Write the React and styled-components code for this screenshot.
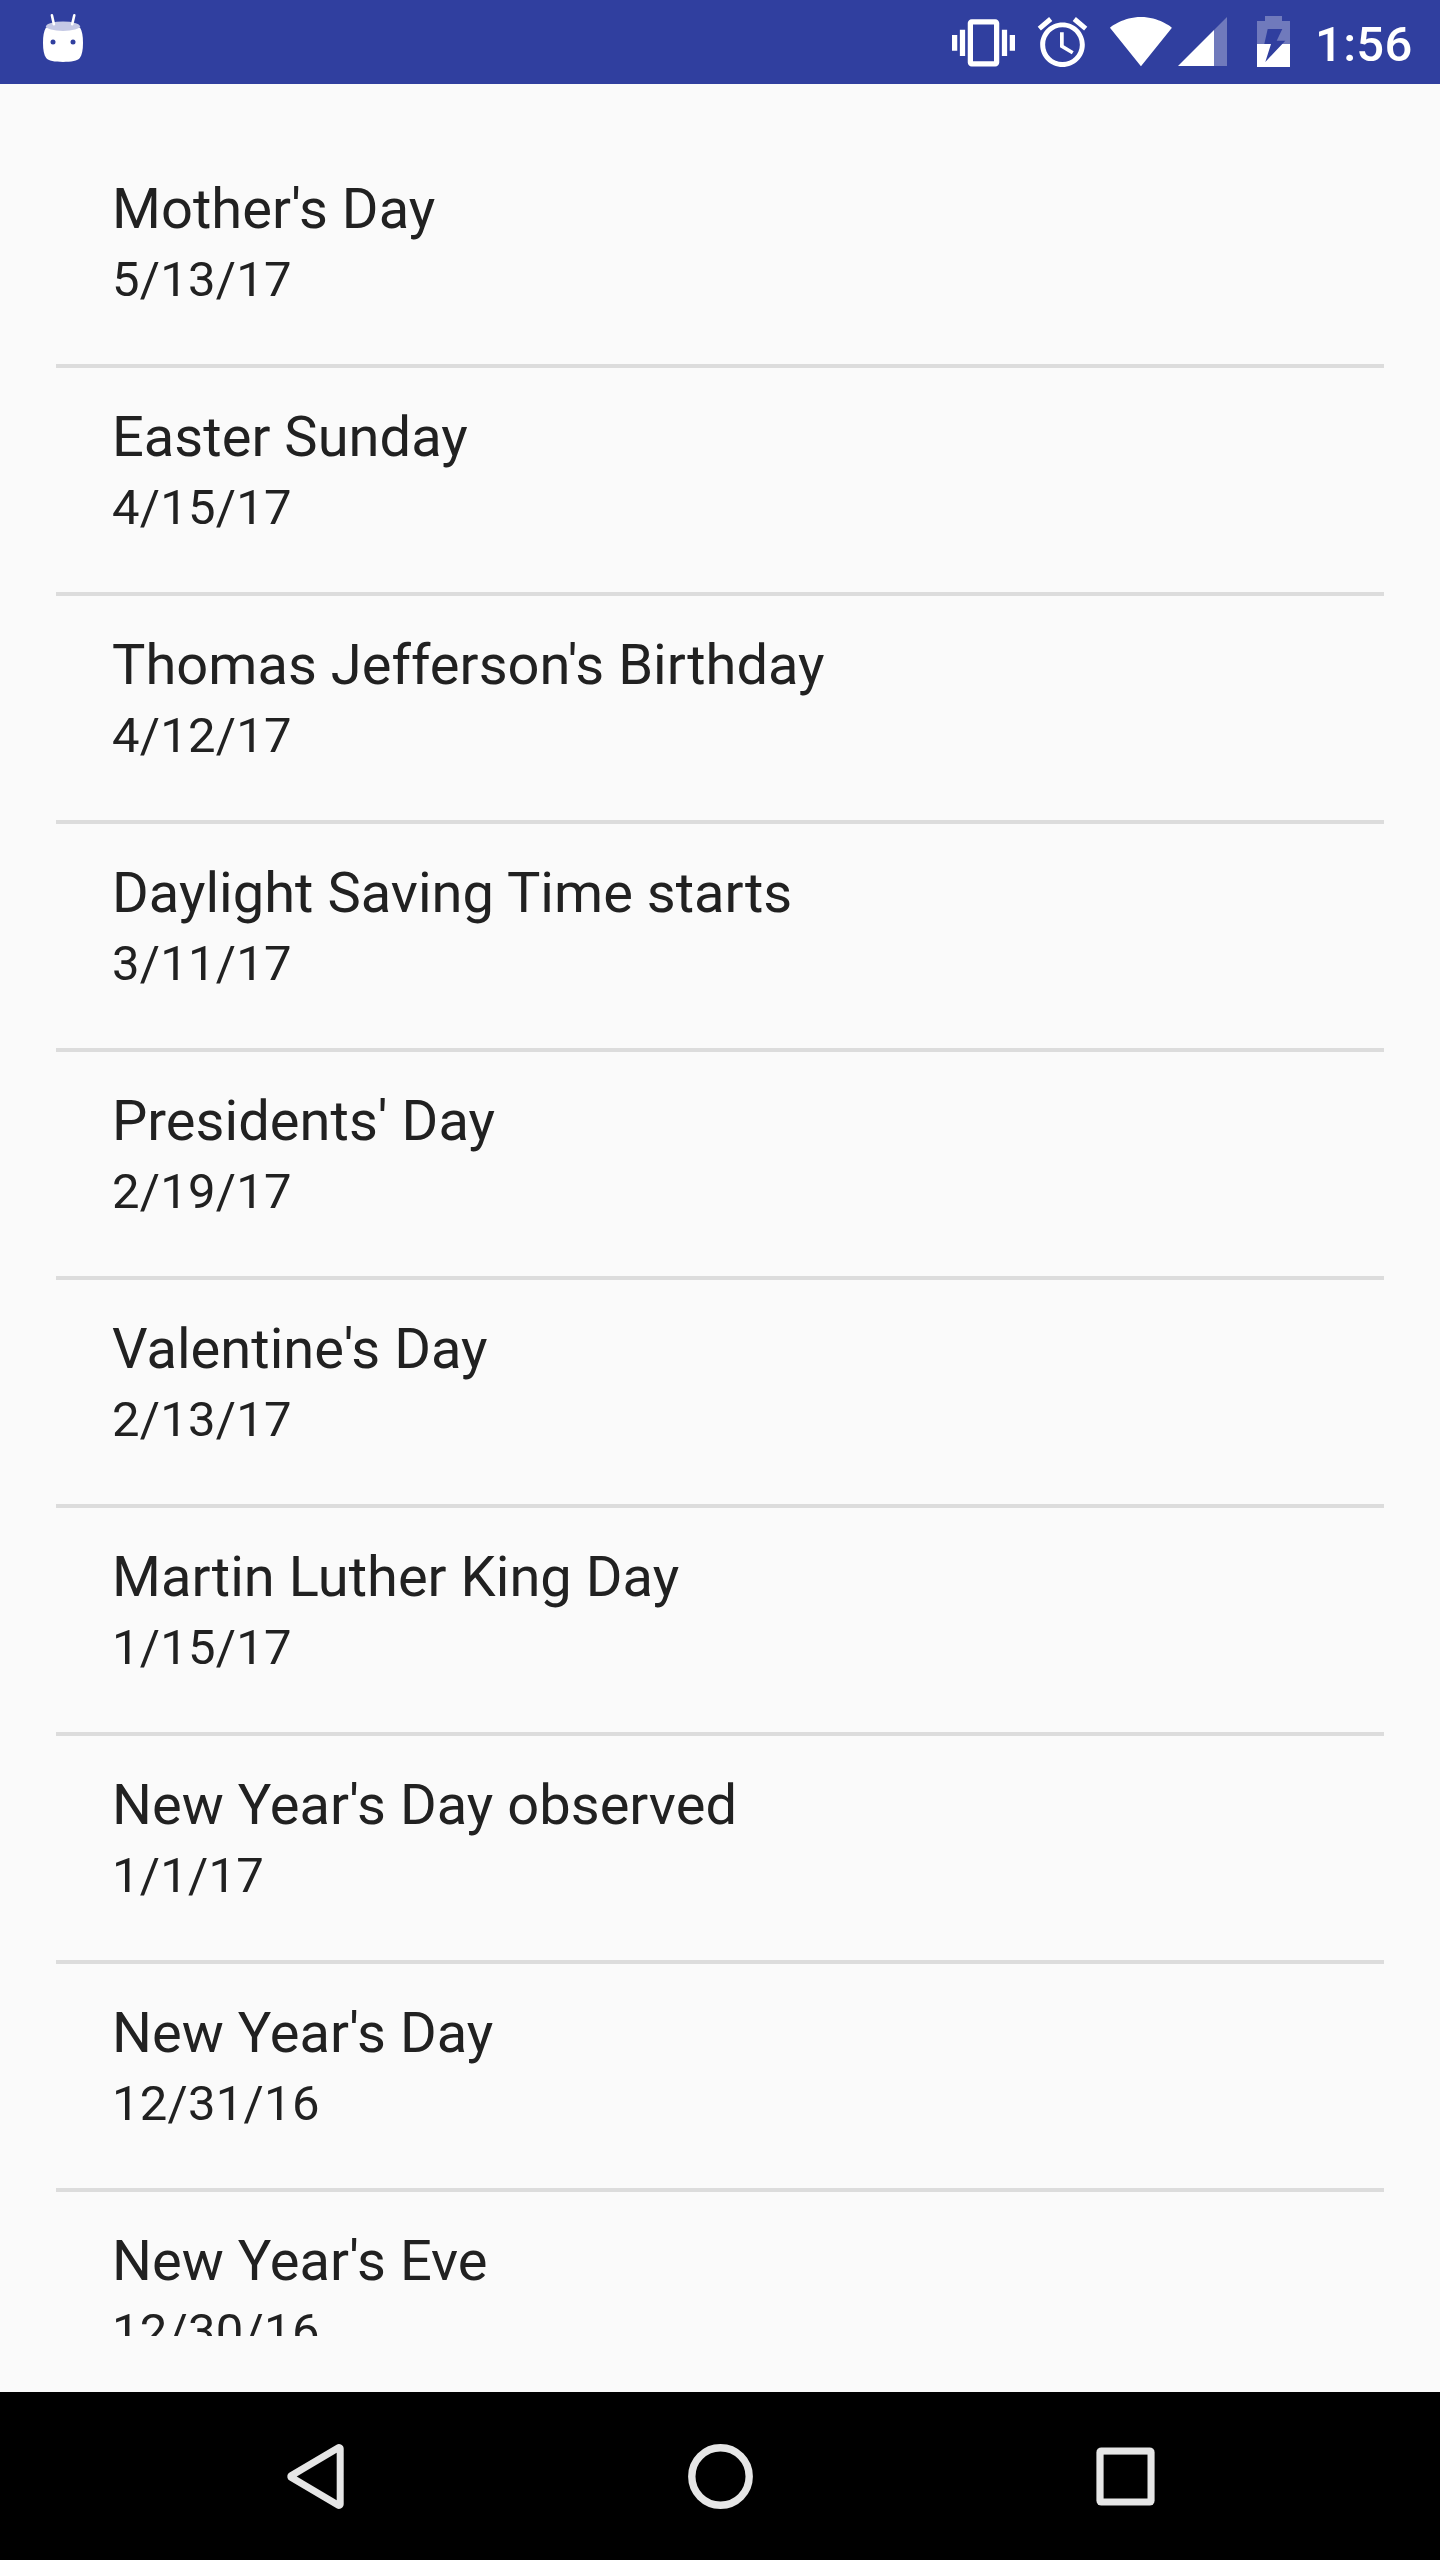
import React from "react";
import styled, { createGlobalStyle } from "styled-components";

const GlobalStyle = createGlobalStyle`
  *, *::before, *::after { box-sizing: border-box; }
  body { margin: 0; background: #fafafa; font-family: Roboto, "Noto Sans", sans-serif; }
  svg { display: block; flex: none; }
`;

const Screen = styled.div`
  display: flex;
  flex-direction: column;
  width: 1440px;
  height: 2560px;
  overflow: hidden;
  background: #fafafa;
`;

const StatusBar = styled.header`
  display: flex;
  justify-content: space-between;
  height: 84px;
  flex: none;
  padding: 0 28px 0 40px;
  background: #303f9f;
  color: #fff;
`;

const StatusGroup = styled.div`
  display: flex;
  height: 84px;
`;

const StatusIcon = styled.svg`
  width: ${(p) => p.$width}px;
  height: 84px;
  margin-right: ${(p) => p.$after || 0}px;
  fill: #fff;
`;

const Clock = styled.time`
  width: 97px;
  padding-top: 16px;
  font-size: 49px;
  font-weight: 500;
  letter-spacing: 0.3px;
  line-height: 58px;
  white-space: nowrap;
`;

const Content = styled.main`
  flex: 1;
  min-height: 0;
  padding: 56px;
`;

const List = styled.ul`
  height: 100%;
  margin: 0;
  padding: 0;
  overflow: hidden;
  list-style: none;
`;

const Item = styled.li`
  display: flex;
  flex-direction: column;
  gap: 9px;
  height: 228px;
  padding: 36px 56px 0;
  border-bottom: 4px solid #dcdcdc;
  color: #212121;
  white-space: nowrap;
`;

const Title = styled.span`
  font-size: 56px;
  letter-spacing: 0.04px;
  line-height: 66px;
`;

const DateText = styled.span`
  font-size: 49px;
  letter-spacing: 0.25px;
  line-height: 58px;
`;

const NavBar = styled.nav`
  display: flex;
  align-items: center;
  justify-content: center;
  gap: 333px;
  height: 168px;
  flex: none;
  background: #000;
`;

const NavButton = styled.button`
  width: 72px;
  height: 72px;
  padding: 0;
  border: 0;
  background: none;
`;

const holidays = [
  ["Mother's Day", "5/13/17"],
  ["Easter Sunday", "4/15/17"],
  ["Thomas Jefferson's Birthday", "4/12/17"],
  ["Daylight Saving Time starts", "3/11/17"],
  ["Presidents' Day", "2/19/17"],
  ["Valentine's Day", "2/13/17"],
  ["Martin Luther King Day", "1/15/17"],
  ["New Year's Day observed", "1/1/17"],
  ["New Year's Day", "12/31/16"],
  ["New Year's Eve", "12/30/16"],
];

function RobotIcon() {
  return (
    <StatusIcon $width={46} viewBox="40 0 46 84">
      <path d="M46 27.5 C43.8 31 43 36 43 43 C43 50 44 55 46.2 58 C48 60.8 55 61.9 63 61.9 C71 61.9 78 60.8 79.8 58 C82 55 83 50 83 43 C83 36 82.200 31 80 27.5 Z" />
      <ellipse cx="63" cy="26.200" rx="17" ry="4.700" fill="#c5c9e5" />
      <path d="M51.900 15.300 L53.900 24.200 M74.300 15.300 L72.200 24.200" fill="none" stroke="#fff" strokeWidth="2.600" strokeLinecap="round" />
      <circle cx="53" cy="42" r="2.500" fill="#303f9f" />
      <circle cx="73" cy="42" r="2.500" fill="#303f9f" />
    </StatusIcon>
  );
}

function VibrateIcon() {
  return (
    <StatusIcon $width={63} $after={17} viewBox="952 0 63 84">
      <g transform="translate(952 11.300) scale(2.625)">
        <path d="M0 15h2V9H0v6zm3 2h2V7H3v10zm19-8v6h2V9h-2zm-3 8h2V7h-2v10zM16.500 3h-9C6.670 3 6 3.670 6 4.500v15c0 .83.67 1.500 1.500 1.500h9c.83 0 1.500-.67 1.500-1.500v-15c0-.83-.67-1.500-1.500-1.500zM16 19H8V5h8v14z" />
      </g>
    </StatusIcon>
  );
}

function AlarmIcon() {
  return (
    <StatusIcon $width={61} $after={15} viewBox="1032 0 61 84">
      <g transform="translate(1032.750 12.500) scale(2.479)">
        <path d="M22 5.720l-4.600-3.860-1.290 1.530 4.600 3.860L22 5.720zM7.880 3.390L6.600 1.860 2 5.710l1.290 1.530 4.590-3.850zM12.500 8H11v6l4.750 2.850.75-1.230-4-2.370V8zM12 4c-4.970 0-9 4.030-9 9s4.020 9 9 9c4.970 0 9-4.030 9-9s-4.030-9-9-9zm0 16c-3.870 0-7-3.130-7-7s3.130-7 7-7 7 3.130 7 7-3.130 7-7 7z" />
      </g>
    </StatusIcon>
  );
}

function WifiIcon() {
  return (
    <StatusIcon $width={66} $after={3} viewBox="1108 0 66 84">
      <g transform="translate(1109 9) scale(2.663)">
        <path d="M12.010 21.490L23.640 7c-.45-.34-4.930-4-11.640-4C5.280 3 .81 6.660.36 7l11.630 14.490.010.010.010-.010z" />
      </g>
    </StatusIcon>
  );
}

function SignalIcon() {
  return (
    <StatusIcon $width={50} $after={30} viewBox="1177 0 50 84">
      <path d="M1214 30V66H1227V17Z" fillOpacity="0.310" />
      <path d="M1178 66L1214 30V66Z" />
    </StatusIcon>
  );
}

function BatteryIcon() {
  return (
    <StatusIcon $width={33} $after={25} viewBox="1257 0 33 84">
      <path d="M1265 16H1282V21H1290V44H1257V21H1265Z" fillOpacity="0.310" />
      <path d="M1257 44H1290V67H1257Z" />
      <path d="M1267.700 29H1282.300L1276.700 40.700H1285.300L1265.300 62L1271 44H1264.300Z" fill="#303f9f" />
    </StatusIcon>
  );
}

function BackIcon() {
  return (
    <svg width="72" height="72" viewBox="279 2440 72 72">
      <path d="M339 2448.700V2504.300L292 2476.500Z" fill="#e6e6e6" stroke="#e6e6e6" strokeWidth="9.400" strokeLinejoin="round" />
      <path d="M336.700 2452.700V2500.300L296.700 2476.500Z" fill="#000" />
    </svg>
  );
}

function HomeIcon() {
  return (
    <svg width="72" height="72" viewBox="684 2440 72 72">
      <circle cx="720.500" cy="2476.500" r="28.700" fill="none" stroke="#e6e6e6" strokeWidth="7.400" />
    </svg>
  );
}

function RecentsIcon() {
  return (
    <svg width="72" height="72" viewBox="1089 2440 72 72">
      <rect x="1096.400" y="2447.400" width="58.200" height="58.200" rx="5" fill="#e6e6e6" />
      <rect x="1103.600" y="2454.600" width="43.900" height="43.900" fill="#000" />
    </svg>
  );
}

export default function App() {
  return (
    <Screen>
      <GlobalStyle />
      <StatusBar>
        <StatusGroup>
          <RobotIcon />
        </StatusGroup>
        <StatusGroup>
          <VibrateIcon />
          <AlarmIcon />
          <WifiIcon />
          <SignalIcon />
          <BatteryIcon />
          <Clock>1:56</Clock>
        </StatusGroup>
      </StatusBar>
      <Content>
        <List>
          {holidays.map(([name, date]) => (
            <Item key={name}>
              <Title>{name}</Title>
              <DateText>{date}</DateText>
            </Item>
          ))}
        </List>
      </Content>
      <NavBar>
        <NavButton aria-label="Back"><BackIcon /></NavButton>
        <NavButton aria-label="Home"><HomeIcon /></NavButton>
        <NavButton aria-label="Recents"><RecentsIcon /></NavButton>
      </NavBar>
    </Screen>
  );
}
